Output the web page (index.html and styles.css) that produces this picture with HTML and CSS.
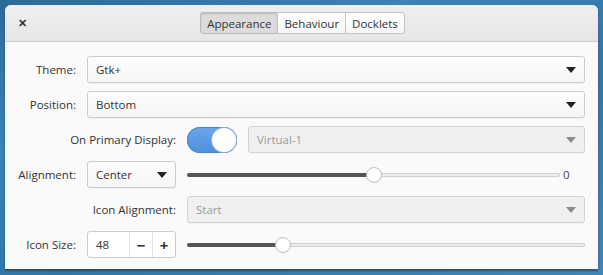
FILE: index.html
```html
<!DOCTYPE html>
<html>
<head>
<meta charset="utf-8">
<link rel="stylesheet" href="styles.css">
</head>
<body>
<div class="window">
  <div class="header">
    <span class="close">&#x2715;</span>
    <div class="tabs">
      <button class="tab active">Appearance</button>
      <button class="tab">Behaviour</button>
      <button class="tab">Docklets</button>
    </div>
  </div>
  <div class="content">
    <div class="grid">
      <div class="label">Theme:</div>
      <div class="combo span2"><span>Gtk+</span><i class="arrow"></i></div>

      <div class="label">Position:</div>
      <div class="combo span2"><span>Bottom</span><i class="arrow"></i></div>

      <div class="label span2l">On Primary Display:</div>
      <div class="primary">
        <div class="switch"><div class="knob"></div></div>
        <div class="combo disabled grow"><span>Virtual-1</span><i class="arrow"></i></div>
      </div>

      <div class="label">Alignment:</div>
      <div class="combo"><span>Center</span><i class="arrow"></i></div>
      <div class="slider-row">
        <div class="slider">
          <div class="fill" style="width: 50%"></div>
          <div class="thumb" style="left: 50%"></div>
        </div>
        <span class="value">0</span>
      </div>

      <div class="label span2l">Icon Alignment:</div>
      <div class="combo disabled"><span>Start</span><i class="arrow"></i></div>

      <div class="label">Icon Size:</div>
      <div class="spin">
        <span class="num">48</span>
        <span class="btn minus">&#x2212;</span>
        <span class="btn plus">+</span>
      </div>
      <div class="slider-row">
        <div class="slider">
          <div class="fill" style="width: 24%"></div>
          <div class="thumb" style="left: 24%"></div>
        </div>
      </div>
    </div>
  </div>
</div>
</body>
</html>
```

FILE: styles.css
```css
html, body {
  margin: 0;
  padding: 0;
}
body {
  width: 603px;
  height: 275px;
  overflow: hidden;
  background: linear-gradient(160deg, #2c6a99 0%, #3b82b5 30%, #2f77a8 60%, #3f86b8 100%);
  font-family: "Open Sans", "Noto Sans", sans-serif;
  font-size: 11.5px;
  color: #333;
}
.window {
  margin: 5px 0 0 5px;
  width: 593px;
  height: 264px;
  background: #fafafa;
  border-radius: 6px 6px 0 0;
  box-shadow: 0 2px 2px rgba(40, 50, 60, 0.6);
  display: flex;
  flex-direction: column;
  overflow: hidden;
}
.header {
  height: 36px;
  background: linear-gradient(#efefef, #e6e6e6);
  border-bottom: 1px solid #cfcfcf;
  display: flex;
  align-items: center;
  justify-content: center;
  position: relative;
}
.close {
  position: absolute;
  left: 13px;
  top: 10px;
  font-size: 11px;
  font-weight: bold;
  color: #333;
}
.tabs {
  display: flex;
  margin-left: 2px;
}
.tab {
  height: 22px;
  padding: 0 6px;
  border: 1px solid #c4c4c4;
  background: linear-gradient(#ffffff, #f7f7f7);
  font-family: "Open Sans", "Noto Sans", sans-serif;
  font-size: 11.5px;
  color: #333;
  margin: 0;
  margin-left: -1px;
}
.tab:first-child {
  border-radius: 3px 0 0 3px;
  margin-left: 0;
}
.tab:last-child {
  border-radius: 0 3px 3px 0;
}
.tab.active {
  background: #dcdcdc;
  box-shadow: inset 0 1px 2px rgba(0, 0, 0, 0.15);
  border-color: #bcbcbc;
}
.content {
  padding: 14px 13px 0 11px;
}
.grid {
  display: grid;
  grid-template-columns: 60px 89px 1fr;
  column-gap: 11px;
  row-gap: 8px;
  align-items: center;
}
.label {
  text-align: right;
  white-space: nowrap;
  justify-self: end;
}
.grid .span2 {
  grid-column: span 2;
}
.grid .span2l {
  grid-column: 1 / span 2;
}
.combo {
  height: 25px;
  border: 1px solid #cbcbcb;
  border-radius: 3px;
  background: linear-gradient(#fdfdfd, #f6f6f6);
  display: flex;
  align-items: center;
  padding: 0 8px 0 8px;
  box-shadow: 0 1px 0 rgba(0, 0, 0, 0.04);
}
.combo span {
  flex: 1;
}
.arrow {
  width: 0;
  height: 0;
  border-left: 5px solid transparent;
  border-right: 5px solid transparent;
  border-top: 6px solid #222;
  margin-top: 1px;
}
.combo.disabled {
  background: #f0f0f0;
  color: #9b9b9b;
  border-color: #d4d4d4;
}
.combo.disabled .arrow {
  border-top-color: #8c8c8c;
}
.primary {
  display: flex;
  align-items: center;
  gap: 11px;
}
.grow {
  flex: 1;
}
.switch {
  width: 50px;
  height: 26px;
  border-radius: 13px;
  background: linear-gradient(#6aa6ec, #4f8fdc);
  box-shadow: inset 0 0 0 1px #4a86cf;
  display: flex;
  align-items: center;
  justify-content: flex-end;
  flex: none;
}
.knob {
  width: 24px;
  height: 24px;
  border-radius: 50%;
  background: #fff;
  box-shadow: 0 0 0 1px #8fb3dd;
  margin-right: 1px;
}
.slider-row {
  display: flex;
  align-items: center;
  gap: 3px;
  height: 26px;
}
.slider {
  flex: 1;
  height: 4px;
  border-radius: 3px;
  background: #ececec;
  box-shadow: inset 0 0 0 1px #cfcfcf;
  position: relative;
}
.fill {
  height: 4px;
  border-radius: 3px;
  background: #555;
}
.thumb {
  position: absolute;
  top: -6px;
  width: 14px;
  height: 14px;
  margin-left: -8px;
  border-radius: 50%;
  background: #fff;
  border: 1px solid #bdbdbd;
}
.value {
  font-size: 11.5px;
  color: #444;
  width: 22px;
}
.spin {
  height: 25px;
  border: 1px solid #cbcbcb;
  border-radius: 3px;
  background: #fff;
  display: flex;
  align-items: stretch;
}
.num {
  width: 33px;
  padding-left: 8px;
  display: flex;
  align-items: center;
}
.btn {
  flex: 1;
  border-left: 1px solid #e0e0e0;
  display: flex;
  align-items: center;
  justify-content: center;
  font-weight: bold;
  font-size: 15px;
  color: #333;
}
```
